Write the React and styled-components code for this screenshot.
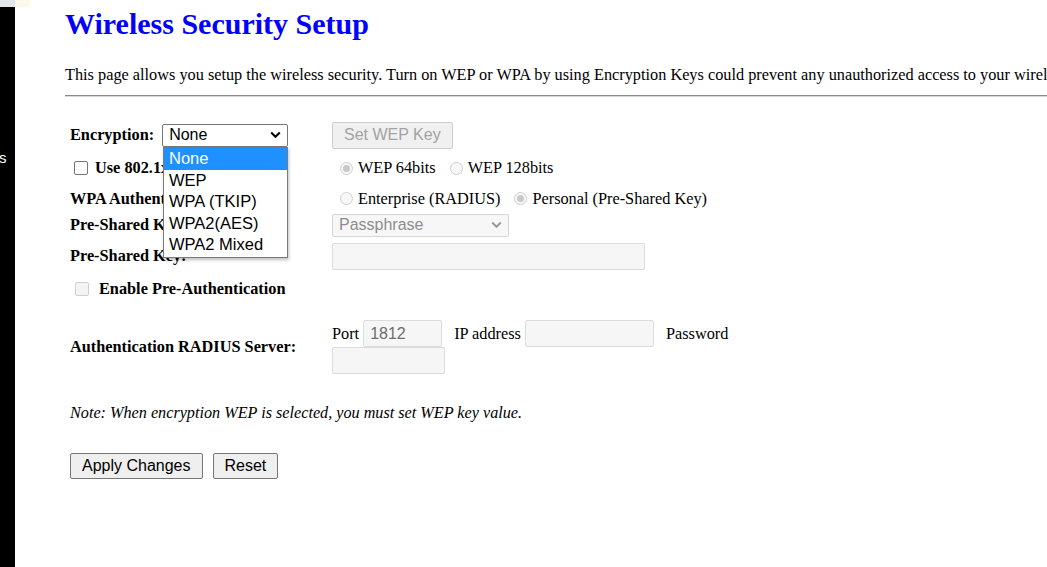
import React from "react";
import styled, { createGlobalStyle } from "styled-components";

const Global = createGlobalStyle`
  html, body { margin: 0; padding: 0; overflow: hidden; background: #fff; }
  body { font-family: "Liberation Serif", "Times New Roman", serif; color: #000; }
`;

const Page = styled.div`
  display: flex;
  width: 1047px;
  height: 567px;
  overflow: hidden;
`;

const Sidebar = styled.div`
  width: 15px;
  flex: none;
  display: flex;
  flex-direction: column;
  background: #000;
  overflow: hidden;
`;

const SideTop = styled.div`
  height: 7px;
  background: #e3e6ea;
`;

const SideText = styled.div`
  margin-top: 142px;
  color: #fff;
  font-family: "Liberation Sans", Arial, sans-serif;
  font-size: 15px;
  line-height: 18px;
  white-space: nowrap;
  text-indent: -1px;
`;

const Main = styled.div`
  flex: 1;
  min-width: 0;
  padding-left: 50px;
  display: flex;
  flex-direction: column;
`;

const TopStrip = styled.div`
  height: 7px;
  width: 15px;
  background: #fcf8ec;
  margin-left: -50px;
`;

const Title = styled.h2`
  margin: 1px 0 0;
  font-size: 30px;
  line-height: 32px;
  font-weight: bold;
  color: #0000ff;
  white-space: nowrap;
`;

const Intro = styled.p`
  margin: 26px 0 0;
  font-size: 16.3px;
  line-height: 18px;
  white-space: nowrap;
`;

const Rule = styled.hr`
  margin: 11px 0 0;
  width: 1100px;
  border: 0;
  border-top: 1px solid #8a8a8a;
  border-bottom: 1px solid #d8d8d8;
  height: 0;
`;

const Form = styled.div`
  margin-top: 23px;
  margin-left: 5px;
  display: grid;
  grid-template-columns: 262px auto;
  position: relative;
`;

const Label = styled.div`
  height: ${(p) => p.$h}px;
  display: flex;
  align-items: center;
  font-weight: bold;
  font-size: 16.3px;
  white-space: nowrap;
  gap: ${(p) => p.$gap || 0}px;
`;

const Cell = styled.div`
  height: ${(p) => p.$h}px;
  display: flex;
  align-items: center;
  font-size: 16.3px;
  white-space: nowrap;
`;

const SelectBox = styled.div`
  box-sizing: border-box;
  width: ${(p) => p.$w}px;
  height: ${(p) => p.$hh || 23}px;
  display: flex;
  align-items: center;
  justify-content: space-between;
  padding: 0 6px 0 6px;
  border: 1px solid ${(p) => (p.$disabled ? "#d6d6d6" : "#767676")};
  border-radius: 2px;
  background: ${(p) => (p.$disabled ? "#f7f7f7" : "#fff")};
  color: ${(p) => (p.$disabled ? "#8d8d8d" : "#000")};
  font-family: "Liberation Sans", Arial, sans-serif;
  font-size: 16px;
  font-weight: normal;
`;

const Chevron = ({ color }) => (
  <svg width="11" height="8" viewBox="0 0 11 8">
    <path d="M1.2 1.5 L5.5 5.8 L9.8 1.5" fill="none" stroke={color} strokeWidth="2" />
  </svg>
);

const Button = styled.button`
  box-sizing: border-box;
  height: ${(p) => p.$h || 26}px;
  padding: 0 ${(p) => p.$pad || 11}px;
  margin-right: ${(p) => p.$mr || 0}px;
  border: 1px solid ${(p) => (p.disabled ? "#cfcfcf" : "#767676")};
  border-radius: 2px;
  background: ${(p) => (p.disabled ? "#f0f0f0" : "#efefef")};
  color: ${(p) => (p.disabled ? "#a3a3a3" : "#000")};
  font-family: "Liberation Sans", Arial, sans-serif;
  font-size: 16px;
`;

const Check = styled.span`
  box-sizing: border-box;
  display: inline-block;
  flex: none;
  width: 14px;
  height: 14px;
  border: 1px solid ${(p) => (p.$disabled ? "#d0d0d0" : "#767676")};
  border-radius: 2px;
  background: ${(p) => (p.$disabled ? "#f4f4f4" : "#fff")};
  margin-left: ${(p) => p.$ml}px;
  margin-right: ${(p) => p.$mr}px;
`;

const Radio = styled.span`
  box-sizing: border-box;
  display: inline-flex;
  flex: none;
  align-items: center;
  justify-content: center;
  width: 13px;
  height: 13px;
  border-radius: 50%;
  border: 1px solid #cfcfcf;
  background: #f7f7f7;
  margin-left: ${(p) => p.$ml}px;
  margin-right: 5px;
  &::after {
    content: "";
    display: ${(p) => (p.$on ? "block" : "none")};
    width: 7px;
    height: 7px;
    border-radius: 50%;
    background: #c8c8c8;
  }
`;

const TextInput = styled.div`
  box-sizing: border-box;
  width: ${(p) => p.$w}px;
  height: ${(p) => p.$h || 27}px;
  border: 1px solid #dcdcdc;
  border-radius: 2px;
  background: #f6f6f6;
  color: #6d6d6d;
  font-family: "Liberation Sans", Arial, sans-serif;
  font-size: 16px;
  display: flex;
  align-items: center;
  padding: 0 6px;
  margin-left: ${(p) => p.$ml || 0}px;
`;

const RadiusWrap = styled.div`
  width: 415px;
  display: flex;
  flex-wrap: wrap;
  align-items: center;
  font-size: 16.3px;
  white-space: nowrap;
`;

const Word = styled.span`
  margin-left: ${(p) => p.$ml || 0}px;
`;

const Note = styled.p`
  margin: 15px 0 0 5px;
  font-style: italic;
  font-size: 16.2px;
  line-height: 18px;
`;

const Actions = styled.div`
  margin: 31px 0 0 5px;
  display: flex;
`;

const Popup = styled.div`
  position: absolute;
  left: 93px;
  top: 27px;
  width: 125px;
  box-sizing: border-box;
  border: 1px solid #7a7a7a;
  background: #fff;
  box-shadow: 1px 2px 3px rgba(0, 0, 0, 0.25);
  font-family: "Liberation Sans", Arial, sans-serif;
  font-size: 16.5px;
  padding-bottom: 1px;
  z-index: 5;
`;

const Option = styled.div`
  height: 21.6px;
  line-height: 21.6px;
  padding-left: 5px;
  background: ${(p) => (p.$active ? "#1e90ff" : "transparent")};
  color: ${(p) => (p.$active ? "#fff" : "#000")};
`;

export default function App() {
  return (
    <>
      <Global />
      <Page>
        <Sidebar>
          <SideTop />
          <SideText>s</SideText>
        </Sidebar>
        <Main>
          <TopStrip />
          <Title>Wireless Security Setup</Title>
          <Intro>
            This page allows you setup the wireless security. Turn on WEP or WPA by using Encryption Keys could
            prevent any unauthorized access to your wireless network.
          </Intro>
          <Rule />
          <Form>
            <Label $h={30} $gap={8}>
              Encryption:
              <SelectBox $w={126}>
                <span>None</span>
                <Chevron color="#000" />
              </SelectBox>
            </Label>
            <Cell $h={30}>
              <Button disabled $h={27}>Set WEP Key</Button>
            </Cell>

            <Label $h={36}>
              <Check $ml={4} $mr={7} />
              Use 802.1x Authentication
            </Label>
            <Cell $h={36}>
              <Radio $ml={8} $on />WEP 64bits
              <Radio $ml={14} />WEP 128bits
            </Cell>

            <Label $h={25}>WPA Authentication Mode:</Label>
            <Cell $h={25}>
              <Radio $ml={8} />Enterprise (RADIUS)
              <Radio $ml={14} $on />Personal (Pre-Shared Key)
            </Cell>

            <Label $h={28}>Pre-Shared Key Format:</Label>
            <Cell $h={28}>
              <SelectBox $w={177} $disabled>
                <span>Passphrase</span>
                <Chevron color="#9a9a9a" />
              </SelectBox>
            </Cell>

            <Label $h={34}>Pre-Shared Key:</Label>
            <Cell $h={34}>
              <TextInput $w={313} />
            </Cell>

            <Label $h={32}>
              <Check $ml={5} $mr={10} $disabled />
              Enable Pre-Authentication
            </Label>
            <Cell $h={32} />

            <Label $h={84}>Authentication RADIUS Server:</Label>
            <Cell $h={84}>
              <RadiusWrap>
                <Word>Port</Word>
                <TextInput $w={79} $ml={4}>1812</TextInput>
                <Word $ml={12}>IP address</Word>
                <TextInput $w={129} $ml={4} />
                <Word $ml={12}>Password</Word>
                <TextInput $w={113} />
              </RadiusWrap>
            </Cell>

            <Popup>
              <Option $active>None</Option>
              <Option>WEP</Option>
              <Option>WPA (TKIP)</Option>
              <Option>WPA2(AES)</Option>
              <Option>WPA2 Mixed</Option>
            </Popup>
          </Form>
          <Note>Note: When encryption WEP is selected, you must set WEP key value.</Note>
          <Actions>
            <Button $mr={10}>Apply Changes</Button>
            <Button>Reset</Button>
          </Actions>
        </Main>
      </Page>
    </>
  );
}
